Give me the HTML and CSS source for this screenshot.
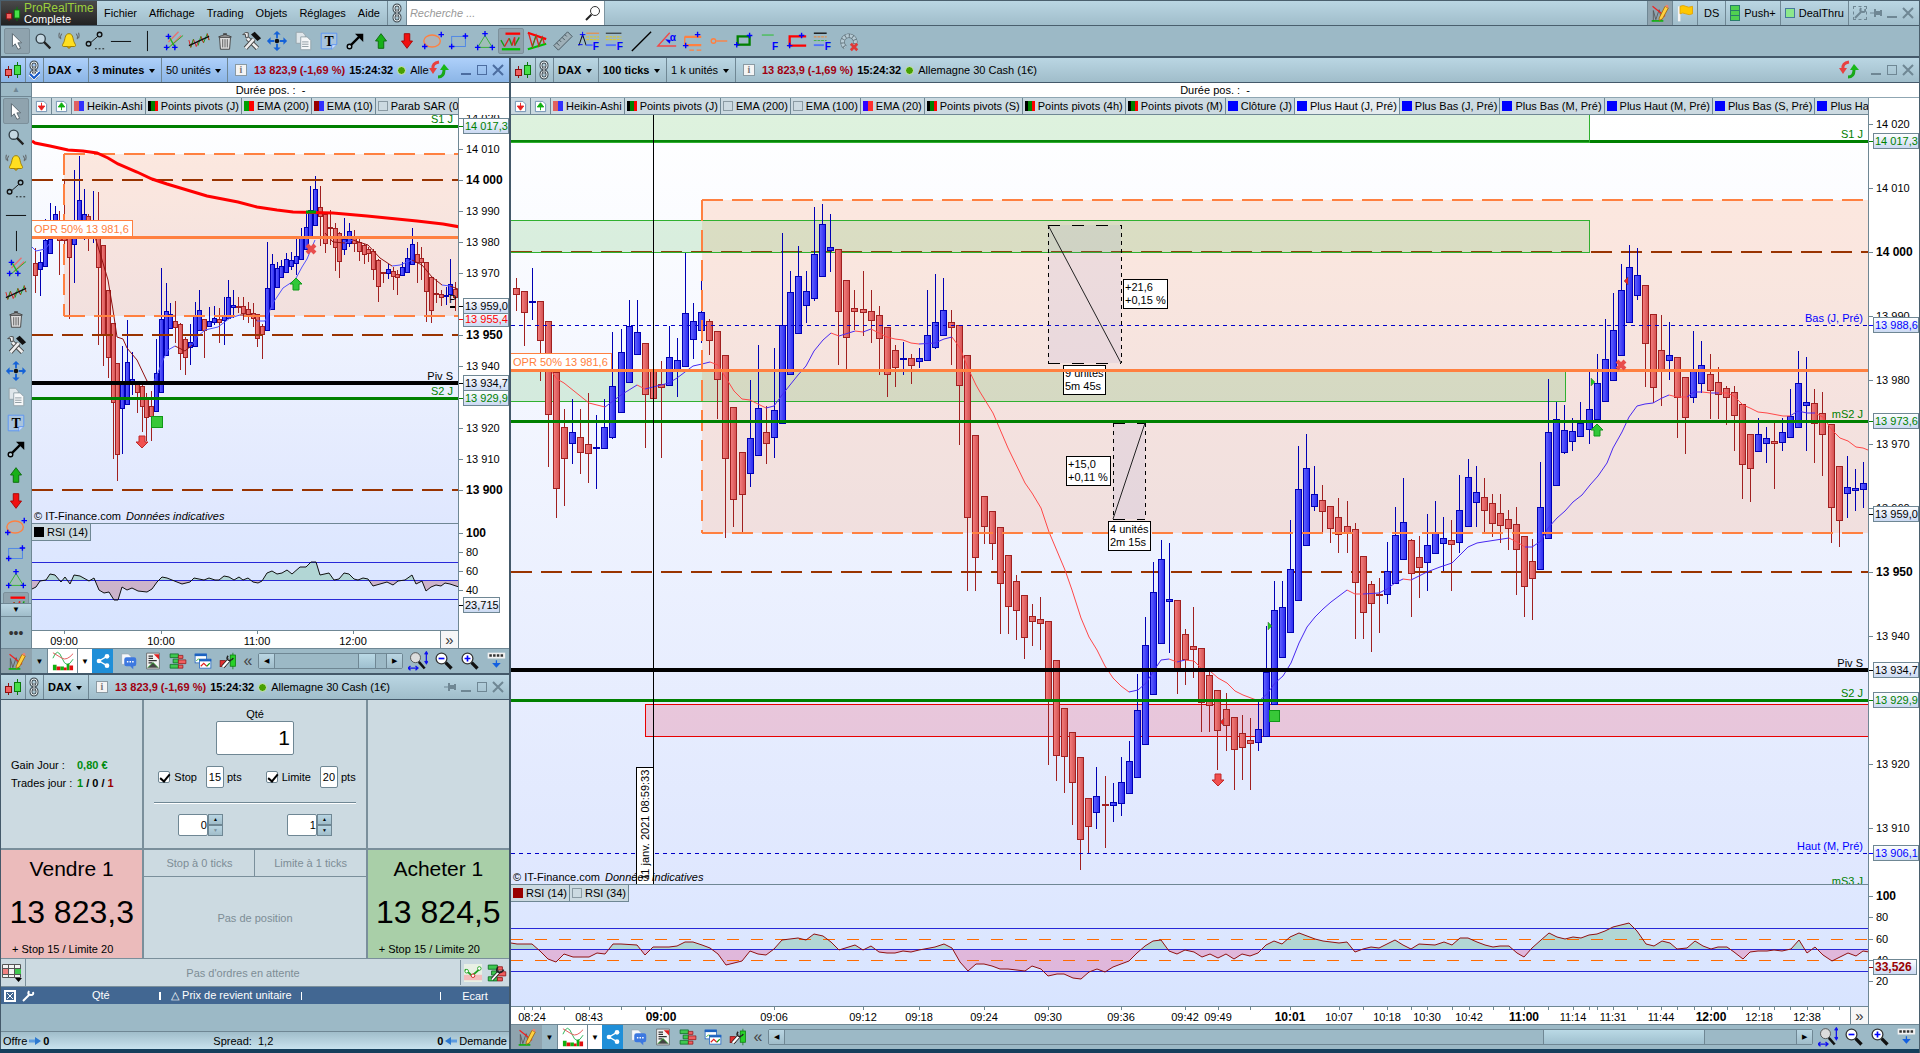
FILE: index.html
```html
<!DOCTYPE html>
<html lang="fr">
<head>
    <meta charset="UTF-8">
    <meta name="viewport" content="width=device-width, initial-scale=1.0">
    <title>ProRealTime Complete</title>
    <link rel="stylesheet" href="styles.css">
</head>
<body>
    <svg class="defs" aria-hidden="true">
        <defs>
            <linearGradient id="candleUp"><stop offset="0" stop-color="#6464ff"/><stop offset="1" stop-color="#2828f0"/></linearGradient>
            <linearGradient id="candleDown"><stop offset="0" stop-color="#f58080"/><stop offset="1" stop-color="#d25050"/></linearGradient>
            <linearGradient id="tag" x2="0" y2="1"><stop offset="0" stop-color="#fff"/><stop offset="1" stop-color="#c9d8f2"/></linearGradient>
        </defs>
    </svg>
    <svg class="symbols" aria-hidden="true">
        <symbol id="candles" viewBox="0 0 18 18"><path d="M4.500 5v12" stroke="#8b1010"/><path d="M13.500 1v16" stroke="#0a7a0a"/><rect x="1.500" y="8.500" width="6" height="6" fill="#f06060" stroke="#8b1010"/><rect x="10.500" y="4.500" width="6" height="9" fill="#48e048" stroke="#0a7a0a"/></symbol>
        <symbol id="link" viewBox="0 0 12 20"><g fill="none" stroke="#4a555c" stroke-width="3"><rect x="3" y="2" width="6" height="7" rx="3"/><rect x="3" y="11" width="6" height="7" rx="3"/></g><g fill="none" stroke="#e8eef0"><rect x="3" y="2" width="6" height="7" rx="3"/><rect x="3" y="11" width="6" height="7" rx="3"/></g><path d="M6 6v8" stroke="#4a555c" stroke-width="3"/><path d="M6 6v8" stroke="#e8eef0"/></symbol>
        <symbol id="link-check" viewBox="0 0 12 20"><use href="#link"/><path d="M2 14l4 4 6-6" fill="none" stroke="#fff" stroke-width="4"/><path d="M2 14l4 4 6-6" fill="none" stroke="#1458c8" stroke-width="2"/></symbol>
        <symbol id="cursor" viewBox="0 0 24 24"><path d="M7 4v14l3-3 3 6 3-1-3-6h4z" fill="#fff" stroke="#56646c"/></symbol>
        <symbol id="loupe" viewBox="0 0 24 24"><circle cx="9.500" cy="9.500" r="5" fill="#c5d8e2" stroke="#34424a" stroke-width="1.500"/><path d="M13 13l7 7" stroke="#222" stroke-width="2.500"/></symbol>
        <symbol id="bell" viewBox="0 0 24 24"><path d="M12 4c-5 0-4 7-6 10-2 3-1 4 0 4h12c1 0 2-1 0-4-2-3-1-10-6-10z" fill="#ffdf20" stroke="#9a7a00"/><path d="M10 18q2 4 4 0" fill="#e0a800" stroke="#9a7a00"/><path d="M4 4q-2 3-1 6M20 4q2 3 1 6M1.500 3q-1 3 0 6M22.500 3q1 3 0 6" fill="none" stroke="#555"/></symbol>
        <symbol id="segment" viewBox="0 0 24 24"><path d="M7 14l8-7" stroke="#111"/><circle cx="5" cy="15" r="2.500" fill="none" stroke="#111" stroke-width="1.500"/><circle cx="17" cy="5" r="2.500" fill="none" stroke="#111" stroke-width="1.500"/><path d="M12 20.500h10" stroke="#111" stroke-dasharray="2 2"/></symbol>
        <symbol id="hline" viewBox="0 0 24 24"><path d="M1 12.500h22" stroke="#000"/></symbol>
        <symbol id="vline" viewBox="0 0 24 24"><path d="M12.500 1v22" stroke="#000"/></symbol>
        <symbol id="channel" viewBox="0 0 24 24"><path d="M7 13L18 2M10 17L21 6" stroke="#e87070" stroke-width="1.500"/><path d="M5 21L23 6" stroke="#20b020"/><path d="M7 6l8 14" stroke="#20b020" stroke-width="1.500"/><path d="M4 7h6M7 4v6M2 19h6M5 16v6M11 19h6M14 16v6" stroke="#00f" stroke-width="1.500"/></symbol>
        <symbol id="zigzag" viewBox="0 0 24 24"><path d="M1 11l2 8 3-9 3 8 3-7" fill="none" stroke="#e02020"/><path d="M3 19l3-9M11 17l3-10 3 7 4-10 2 7" fill="none" stroke="#10a010"/><path d="M14 7l3 7M21 4l2 7" stroke="#e02020"/><path d="M1 17L23 7" stroke="#111" stroke-width="1.500"/></symbol>
        <symbol id="trash" viewBox="0 0 24 24"><path d="M6 8h12l-1 13H7z" fill="#ddd" stroke="#444"/><path d="M9.500 10v9M12 10v9M14.500 10v9" stroke="#555"/><path d="M5 7.500q7-4 14 0z" fill="#eee" stroke="#444"/><path d="M10 4.500h4" stroke="#444" stroke-width="2"/></symbol>
        <symbol id="tools" viewBox="0 0 24 24"><path d="M8 9L19 20" stroke="#444" stroke-width="5"/><path d="M8 9L19 20" stroke="#eee" stroke-width="3"/><path d="M3 5l3 0 0 3 3 0 0-5q-3-1-5 1z" fill="#eee" stroke="#444"/><path d="M6 20L15 10" stroke="#444" stroke-width="5"/><path d="M6 20L15 10" stroke="#eee" stroke-width="3"/><path d="M12 5l4-3 7 7-4 3z" fill="#111"/></symbol>
        <symbol id="move" viewBox="0 0 24 24"><circle cx="12" cy="12" r="2.500" fill="#111"/><path d="M12 1l4 4h-3v4h-2V5H8zM12 23l4-4h-3v-4h-2v4H8zM1 12l4-4v3h4v2H5v3zM23 12l-4-4v3h-4v2h4v3z" fill="#1462d8"/></symbol>
        <symbol id="copy" viewBox="0 0 24 24"><path d="M4.500 2.500h7l3 3v9h-10z" fill="#dfe6ea" stroke="#93a2aa"/><path d="M9.500 7.500h7l4 4v10h-11z" fill="#f5f7f8" stroke="#93a2aa"/><path d="M11 13h7M11 15.500h7M11 18h7" stroke="#8a979e"/></symbol>
        <symbol id="text" viewBox="0 0 24 24"><path d="M3.500 3.500h17v12l-5 5h-12z" fill="#a9c4dd" stroke="#5c94f4"/><path d="M15 21v-5h5" fill="#cfe0fa" stroke="#5c94f4"/><text x="12" y="17" class="icon-serif">T</text></symbol>
        <symbol id="arrow" viewBox="0 0 24 24"><path d="M7 17L17 7" stroke="#000" stroke-width="2.500"/><path d="M12 4h9v9z" fill="#000"/><circle cx="6" cy="18" r="2.500" fill="#b8ced8" stroke="#000" stroke-width="1.500"/></symbol>
        <symbol id="up" viewBox="0 0 24 24"><path d="M12 4l6 8h-3v8H9v-8H6z" fill="#18b018" stroke="#0a6a0a"/></symbol>
        <symbol id="down" viewBox="0 0 24 24"><path d="M12 20l6-8h-3V4H9v8H6z" fill="#f01010" stroke="#a00"/></symbol>
        <symbol id="ellipse" viewBox="0 0 24 24"><ellipse cx="11" cy="12" rx="9" ry="6.500" fill="#aeb5b9" stroke="#ff8040" stroke-width="1.500"/><path d="M18 5h6M21 2v6M0 18h6M3 15v6" stroke="#00f" stroke-width="1.500"/></symbol>
        <symbol id="rect" viewBox="0 0 24 24"><rect x="4" y="7" width="15" height="11" fill="none" stroke="#4b83e8"/><path d="M16 6.500h6M19 3.500v6M1 18h6M4 15v6" stroke="#00f" stroke-width="1.500"/></symbol>
        <symbol id="triangle" viewBox="0 0 24 24"><path d="M12 6l8 13H4z" fill="#a0beb8" stroke="#30b030"/><path d="M9 4h6M12 1v6M1 19h6M4 16v6M17 19h6M20 16v6" stroke="#00f" stroke-width="1.500"/></symbol>
        <symbol id="range" viewBox="0 0 24 24"><path d="M6 4h16" stroke="#f00" stroke-width="2.500"/><path d="M2 21h20" stroke="#00c000" stroke-width="2.500"/><path d="M1 11l4 7M10 9l3 8M16 17l5-9" fill="none" stroke="#10a010" stroke-width="1.500"/><path d="M5 18l5-9M13 17l3-9v9" fill="none" stroke="#e02020" stroke-width="1.500"/></symbol>
        <symbol id="wedge" viewBox="0 0 24 24"><path d="M2 3l20 7" stroke="#f00" stroke-width="2.500"/><path d="M2 21l20-6" stroke="#00c000" stroke-width="2.500"/><path d="M3 4l4 14 4-12 3 11 4-9 2 7" fill="none" stroke="#e02020" stroke-width="1.500"/><path d="M7 18L11 6M14 17l4-9" stroke="#10a010"/></symbol>
        <symbol id="ruler" viewBox="0 0 24 24"><path d="M2 17L17 2l5 5L7 22z" fill="#9fb0b8" stroke="#43535c"/><path d="M5 14l3 3M8 11l2 2M11 8l3 3M14 5l2 2" stroke="#43535c"/></symbol>
        <symbol id="fibo1" viewBox="0 0 24 24"><path d="M1 17L5 5l4 12" fill="none" stroke="#000"/><path d="M2 5h6M5 2v6M0 16h5" stroke="#00f"/><path d="M9 3.500h14" stroke="#ff8020"/><path d="M9 7.500h14M9 10.500h14" stroke="#e8c810" stroke-dasharray="3 1"/><path d="M9 16.500h7" stroke="#5070ff" stroke-width="2"/><text x="16" y="22" class="icon-f">F</text></symbol>
        <symbol id="fibo2" viewBox="0 0 24 24"><path d="M2 3.500h17" stroke="#111"/><path d="M2 7.500h17M2 10.500h17" stroke="#e8c810" stroke-dasharray="3 1"/><path d="M2 16.500h11" stroke="#5070ff" stroke-width="2"/><text x="14" y="22" class="icon-f">F</text></symbol>
        <symbol id="diag" viewBox="0 0 24 24"><path d="M2 23L23 2" stroke="#000" stroke-width="1.500"/></symbol>
        <symbol id="angle" viewBox="0 0 24 24"><path d="M15 3L2 17.500h20" fill="none" stroke="#f04848" stroke-width="1.500"/><path d="M10 10l6 1-1 4z" fill="#00f"/><text x="15" y="12" class="icon-f">α</text></symbol>
        <symbol id="orange" viewBox="0 0 24 24"><path d="M3 7.500h18M3 16.500h18" stroke="#ff8040" stroke-width="2.500"/><path d="M3 7v10M8 22h5M16 22h5" stroke="#ff8040" stroke-width="1.500"/><path d="M14 5h6M17 2v6M1 17h6M4 14v6" stroke="#00f" stroke-width="1.500"/></symbol>
        <symbol id="ray" viewBox="0 0 24 24"><circle cx="6" cy="12" r="2.500" fill="none" stroke="#ff8040" stroke-width="1.500"/><path d="M9 12h12" stroke="#ff8040" stroke-width="1.500"/></symbol>
        <symbol id="green" viewBox="0 0 24 24"><rect x="4" y="7" width="13" height="9" fill="none" stroke="#008000" stroke-width="2.500"/><path d="M14 6h6M17 3v6M0 16h6M3 13v6" stroke="#00f" stroke-width="1.500"/></symbol>
        <symbol id="fibo3" viewBox="0 0 24 24"><path d="M2 5.500h13" stroke="#20c020"/><text x="13" y="22" class="icon-f">F</text></symbol>
        <symbol id="red" viewBox="0 0 24 24"><path d="M22 7H4v10h18" fill="none" stroke="#f00" stroke-width="2.500"/><path d="M14 6h6M17 3v6M1 17h6M4 14v6" stroke="#00f" stroke-width="1.500"/></symbol>
        <symbol id="fibo4" viewBox="0 0 24 24"><path d="M2 3.500h14" stroke="#111" stroke-width="1.500"/><path d="M2 7.500h14" stroke="#ff8020" stroke-dasharray="3 1"/><path d="M2 11.500h14" stroke="#40b040" stroke-dasharray="3 1"/><path d="M2 16.500h11" stroke="#5070ff" stroke-width="2"/><text x="14" y="22" class="icon-f">F</text></symbol>
        <symbol id="arc" viewBox="0 0 24 24"><path d="M17 18a7 7 0 1 0-9 1" fill="none" stroke="#65777f" stroke-width="5"/><path d="M17 18a7 7 0 1 0-9 1" fill="none" stroke="#b6cbd5" stroke-width="3.500" stroke-dasharray="3 1"/><path d="M14 15l7 7M21 15l-7 7" stroke="#e03838" stroke-width="3"/></symbol>
        <symbol id="pencil" viewBox="0 0 24 24"><path d="M4 22V9l3 11 4-12 3 12 3-7" fill="none" stroke="#555"/><path d="M3 4l15 12" stroke="#f02020" stroke-width="1.500"/><path d="M2 21.500h14" stroke="#10b010" stroke-width="2"/><path d="M11 18l7-14 4 2-7 13-4 2z" fill="#ffd040" stroke="#a06808"/><path d="M18 4l4 2 0-3-2-1z" fill="#f08070"/></symbol>
        <symbol id="flag" viewBox="0 0 24 24"><path d="M5 4v18" stroke="#f4f4f4" stroke-width="3"/><path d="M6 4q4-2 7 0t8 0v9q-4 2-8 0t-7 0z" fill="#ffc800" stroke="#e0a000"/></symbol>
        <symbol id="refresh" viewBox="0 0 20 20"><path d="M10 2q-7 1-6 7" fill="none" stroke="#e84040" stroke-width="3"/><path d="M0 8h8l-4 6z" fill="#e84040"/><path d="M9 17q6 0 6-7" fill="none" stroke="#18a818" stroke-width="3"/><path d="M11 10h9l-5-6z" fill="#18b818"/></symbol>
        <symbol id="win-min" viewBox="0 0 12 12"><path d="M1 10h10" stroke="currentColor" stroke-width="2"/></symbol>
        <symbol id="win-max" viewBox="0 0 12 12"><rect x="1.500" y="1.500" width="9" height="9" fill="none" stroke="currentColor"/></symbol>
        <symbol id="win-close" viewBox="0 0 12 12"><path d="M1 1l10 10M11 1L1 11" stroke="currentColor" stroke-width="2"/></symbol>
        <symbol id="pin" viewBox="0 0 12 12"><path d="M0 6h5" stroke="currentColor"/><path d="M5 2v8M11 3v6" stroke="currentColor" stroke-width="2"/><path d="M5 6h6" stroke="currentColor" stroke-width="4"/></symbol>
        <symbol id="wrench" viewBox="0 0 12 12"><path d="M1 11L7 5" stroke="currentColor" stroke-width="2"/><path d="M7 1q-2 4 2 4 3 0 2-3" fill="none" stroke="currentColor" stroke-width="2"/></symbol>
        <symbol id="doc-down" viewBox="0 0 14 14"><path d="M1.500 1.500h8l3 3v8h-11z" fill="#fff" stroke="#6d8fb0"/><path d="M7 3v4M3.500 6.500h7L7 11z" fill="#e82020" stroke="#e82020"/></symbol>
        <symbol id="doc-up" viewBox="0 0 14 14"><path d="M1.500 1.500h8l3 3v8h-11z" fill="#fff" stroke="#6d8fb0"/><path d="M7 11V7M3.500 7.500h7L7 3z" fill="#10b010" stroke="#10b010"/></symbol>
        <symbol id="curves" viewBox="0 0 24 24"><path d="M1 9q5-13 10 0t12 1" fill="none" stroke="#20b050"/><path d="M1 3q5 3 10 6t12-5" fill="none" stroke="#e05050"/><path d="M1 16h4v6H1zM9 18h4v4H9zM16 15h3v7h-3z" fill="#10b010"/><path d="M5 18h4v4H5zM13 19h3v3h-3zM19 17h4v5h-4z" fill="#e01010"/></symbol>
        <symbol id="share" viewBox="0 0 24 24"><path d="M18 5L6 12l12 7" fill="none" stroke="#fff" stroke-width="2"/><circle cx="18" cy="5" r="3.500" fill="#fff"/><circle cx="6" cy="12" r="3.500" fill="#fff"/><circle cx="18" cy="19" r="3.500" fill="#fff"/></symbol>
        <symbol id="chat" viewBox="0 0 24 24"><path d="M3.500 2.500h9l4 4v10h-13z" fill="#f4f7fa" stroke="#9aaab5"/><path d="M10 7h10q3 0 3 3v6q0 3-3 3h-1v4l-4-4h-5q-3 0-3-3v-6q0-3 3-3z" fill="#3c78e0"/><path d="M10.500 13h2M14 13h2M17.500 13h2" stroke="#fff" stroke-width="2"/></symbol>
        <symbol id="news" viewBox="0 0 24 24"><path d="M3.500 1.500h17v21h-17z" fill="#f4f4f4" stroke="#555"/><path d="M6 5.500h6M6 8.500h6M6 11.500h11M6 14.500h5" stroke="#333" stroke-width="1.500"/><path d="M13 3h7v7z" fill="#e02020"/><path d="M5 21l7-7 7 7" fill="#444" stroke="#10a010"/></symbol>
        <symbol id="book" viewBox="0 0 24 24"><path d="M1.500 2.500h11v5h-11zM5.500 9.500h7v5h-7zM1.500 16.500h11v5h-11z" fill="#40c850" stroke="#0a6a20"/><path d="M12.500 4.500h6v4h-6zM12.500 10.500h10v5h-10zM12.500 17.500h6v4h-6z" fill="#f06060" stroke="#901818"/></symbol>
        <symbol id="book-setup" viewBox="0 0 24 24"><use href="#book"/><path d="M6 20L15 10" stroke="#222" stroke-width="4"/><path d="M6 20L15 10" stroke="#fff" stroke-width="2"/><path d="M13 5q-3 5 1 6t6-3" fill="none" stroke="#222" stroke-width="2"/></symbol>
        <symbol id="windows" viewBox="0 0 24 24"><rect x="1.500" y="2.500" width="15" height="12" fill="#fff" stroke="#1c62c0"/><path d="M1 4h16" stroke="#1c62c0" stroke-width="3"/><rect x="7.500" y="9.500" width="15" height="12" fill="#fff" stroke="#1c62c0"/><path d="M7 11h16" stroke="#1c62c0" stroke-width="3"/><path d="M3 12l3-3 2 2" fill="none" stroke="#10a010"/><path d="M9 19l4-4 4 4" fill="none" stroke="#e02020" stroke-width="1.500"/><path d="M17 19l4-4" stroke="#10a010" stroke-width="1.500"/></symbol>
        <symbol id="setup" viewBox="0 0 24 24"><path d="M18.500 1v22" stroke="#0a7a0a"/><rect x="15" y="4" width="7" height="15" fill="#28d028" stroke="#0a7a0a"/><rect x="1.500" y="11.500" width="7" height="8" fill="#e03030" stroke="#801010"/><path d="M5 20L14 10" stroke="#222" stroke-width="5"/><path d="M5 20L14 10" stroke="#fff" stroke-width="3"/><path d="M12 5q-3 5 1 6t6-3" fill="none" stroke="#222" stroke-width="2"/></symbol>
        <symbol id="zoomfit" viewBox="0 0 24 24"><circle cx="9" cy="8" r="6" fill="#dcdcdc" stroke="#444"/><path d="M13 13l7 8" stroke="#111" stroke-width="3"/><path d="M22 2v12M20 4l2-3 2 3M20 12l2 3 2-3M1 20.500h10M3 18l-3 2.500L3 23M9 18l3 2.500L9 23" fill="none" stroke="#1010f0" stroke-width="1.500"/></symbol>
        <symbol id="zoomout" viewBox="0 0 24 24"><circle cx="9" cy="9" r="6.500" fill="#fff" stroke="#333" stroke-width="1.500"/><path d="M14 14l7 7" stroke="#111" stroke-width="4"/><path d="M5.500 9h7" stroke="#00f" stroke-width="2"/></symbol>
        <symbol id="zoomin" viewBox="0 0 24 24"><circle cx="9" cy="9" r="6.500" fill="#fff" stroke="#333" stroke-width="1.500"/><path d="M14 14l7 7" stroke="#111" stroke-width="4"/><path d="M5.500 9h7M9 5.500v7" stroke="#00f" stroke-width="2"/></symbol>
        <symbol id="keyboard" viewBox="0 0 24 24"><path d="M2 2h21v7H2z" fill="#f2f2f2"/><path d="M4 5.500h17" stroke="#333" stroke-width="3" stroke-dasharray="3 1.500"/><path d="M12.500 11v6M9 15h7l-3.500 4z" fill="#1460e0" stroke="#1460e0" stroke-width="1.500"/></symbol>
        <symbol id="grid" viewBox="0 0 22 20"><path d="M1.500 1.500h18v13h-18z" fill="#f4f4f4" stroke="#555"/><path d="M2 6h6v6H2z" fill="#f08080"/><path d="M14 6h6v6h-6z" fill="#40c850"/><path d="M1 5.500h19M1 11.500h19M7.500 1v14M13.500 1v14" stroke="#555"/><path d="M14 15h7l-3.500 4z" fill="#000"/></symbol>
        <symbol id="pnl" viewBox="0 0 20 20"><rect width="20" height="20" fill="#e8f0e4"/><path d="M0 12h20v6H0z" fill="#f3bcbc"/><path d="M1 6l8 7 8-7" fill="none" stroke="#20a020" stroke-width="2"/><circle cx="3" cy="8" r="2" fill="#fff" stroke="#20a020"/><circle cx="10" cy="13" r="2" fill="#fff" stroke="#d02020"/><circle cx="17" cy="5" r="2" fill="#fff" stroke="#20a020"/></symbol>
        <symbol id="flow" viewBox="0 0 12 10"><path d="M0 5h7" stroke="#5c9ce0" stroke-width="3"/><path d="M6 1l6 4-6 4z" fill="#2c78d0"/></symbol>
    </svg>

    <header class="menubar">
        <div class="logo">
            <svg width="16" height="20"><use href="#candles"/></svg>
            <p><b>ProRealTime</b><br>Complete</p>
        </div>
        <nav class="menu">
            <a href="#">Fichier</a><a href="#">Affichage</a><a href="#">Trading</a><a href="#">Objets</a><a href="#">Réglages</a><a href="#">Aide</a>
        </nav>
        <span class="link-cell"><svg width="12" height="20"><use href="#link"/></svg></span>
        <label class="search">
            <input type="search" placeholder="Recherche ..." aria-label="Recherche">
            <svg width="16" height="16" viewBox="0 0 16 16"><circle cx="10" cy="6" r="4.500" fill="none" stroke="#333"/><path d="M6.500 9.500L1 15" stroke="#222" stroke-width="2"/></svg>
        </label>
        <div class="menu-right">
            <button class="pressed" aria-label="Dessin"><svg width="20" height="20"><use href="#pencil"/></svg></button>
            <button aria-label="Drapeau"><svg width="20" height="20"><use href="#flag"/></svg></button>
            <button>DS</button>
            <button><i class="push"></i>Push+</button>
            <button><i class="deal"></i>DealThru</button>
            <div class="win-buttons">
                <button aria-label="Options"><svg class="dashed" width="12" height="12"><use href="#wrench"/></svg></button>
                <button aria-label="Épingler"><svg width="12" height="12"><use href="#pin"/></svg></button>
                <button aria-label="Réduire"><svg width="12" height="12"><use href="#win-min"/></svg></button>
                <button aria-label="Fermer"><svg width="12" height="12"><use href="#win-close"/></svg></button>
            </div>
        </div>
    </header>

    <div class="toolbar" id="toolbar"></div>

    <main class="desk">
        <div class="left">
            <section class="window grow">
                <div class="titlebar active">
                    <span class="cell"><svg width="18" height="18"><use href="#candles"/></svg></span>
                    <span class="cell link-narrow"><svg width="12" height="20"><use href="#link-check"/></svg></span>
                    <span class="drop bold"><select aria-label="Instrument"><option>DAX</option></select></span>
                    <span class="drop bold"><select aria-label="Unité de temps"><option>3 minutes</option></select></span>
                    <span class="drop"><select aria-label="Historique"><option>50 unités</option></select></span>
                    <span class="quote"><i class="info">i</i><b class="price">13 823,9 (-1,69 %)</b><b>15:24:32</b><i class="dot"></i><span class="name">Allemagne 30 Cash (1€)</span></span>
                    <svg class="refresh" width="20" height="20"><use href="#refresh"/></svg>
                    <div class="win-buttons">
                        <button aria-label="Réduire"><svg width="12" height="12"><use href="#win-min"/></svg></button>
                        <button aria-label="Agrandir"><svg width="12" height="12"><use href="#win-max"/></svg></button>
                        <button aria-label="Fermer"><svg width="12" height="12"><use href="#win-close"/></svg></button>
                    </div>
                </div>
                <div class="work">
                    <div class="sidebar">
                        <button class="side-top" aria-label="Haut">▲</button>
                        <div class="side-icons" id="sidebar"></div>
                        <button class="side-more" aria-label="Bas">▼</button>
                        <div class="side-dots">•••</div>
                    </div>
                    <div class="chart">
                        <p class="duree">Durée pos. :&nbsp; -</p>
                        <div class="plots">
                            <div class="chips" id="chipsLeft"></div>
                            <svg class="plot main-plot" id="priceLeft"></svg>
                            <div class="rsi rsi-short">
                                <svg class="plot" id="rsiLeft"></svg>
                                <div class="chips legend"><span class="chip"><i style="background:#000"></i>RSI (14)</span></div>
                            </div>
                            <div class="times"><svg id="timeLeft"></svg><button aria-label="Suite">»</button></div>
                        </div>
                        <div class="axes">
                            <svg class="main-plot axis" id="axisLeft"></svg>
                            <svg class="rsi-short axis" id="rsiAxisLeft"></svg>
                        </div>
                    </div>
                </div>
                <div class="bottombar"></div>
            </section>

            <section class="window">
                <div class="titlebar">
                    <span class="cell"><svg width="18" height="18"><use href="#candles"/></svg></span>
                    <span class="cell link-narrow"><svg width="12" height="20"><use href="#link"/></svg></span>
                    <span class="drop bold"><select aria-label="Instrument"><option>DAX</option></select></span>
                    <span class="quote"><i class="info">i</i><b class="price">13 823,9 (-1,69 %)</b><b>15:24:32</b><i class="dot"></i><span class="name">Allemagne 30 Cash (1€)</span></span>
                    <div class="win-buttons">
                        <button aria-label="Épingler"><svg width="12" height="12"><use href="#pin"/></svg></button>
                        <button aria-label="Réduire"><svg width="12" height="12"><use href="#win-min"/></svg></button>
                        <button aria-label="Agrandir"><svg width="12" height="12"><use href="#win-max"/></svg></button>
                        <button aria-label="Fermer"><svg width="12" height="12"><use href="#win-close"/></svg></button>
                    </div>
                </div>
                <div class="ticket">
                    <div class="stats">
                        <span>Gain Jour :</span><b class="pos">0,80 €</b>
                        <span>Trades jour :</span><b><span class="pos">1</span> / 0 / <span class="neg">1</span></b>
                    </div>
                    <div class="order">
                        <label for="qty">Qté</label>
                        <input class="qty" id="qty" type="text" value="1">
                        <div class="limits">
                            <label><input type="checkbox" checked>Stop</label>
                            <label><input class="pts" type="text" value="15">pts</label>
                            <label class="second"><input type="checkbox" checked>Limite</label>
                            <label><input class="pts" type="text" value="20">pts</label>
                        </div>
                        <hr>
                        <div class="spinners">
                            <div class="spinner"><input type="text" value="0" aria-label="Ticks stop"><span><button aria-label="Plus">▲</button><button aria-label="Moins" disabled>▼</button></span></div>
                            <div class="spinner"><input type="text" value="1" aria-label="Ticks limite"><span><button aria-label="Plus">▲</button><button aria-label="Moins">▼</button></span></div>
                        </div>
                    </div>
                    <div></div>
                    <button class="deal-btn sell"><span>Vendre 1</span><strong>13 823,3</strong><small>+ Stop 15 / Limite 20</small></button>
                    <div class="position">
                        <div class="ticks"><button>Stop à 0 ticks</button><button>Limite à 1 ticks</button></div>
                        <p>Pas de position</p>
                    </div>
                    <button class="deal-btn buy"><span>Acheter 1</span><strong>13 824,5</strong><small>+ Stop 15 / Limite 20</small></button>
                </div>
                <div class="orders">
                    <button aria-label="Affichage"><svg width="22" height="20"><use href="#grid"/></svg></button>
                    <p>Pas d'ordres en attente</p>
                    <div><svg width="18" height="18"><use href="#pnl"/></svg><svg width="20" height="20"><use href="#book-setup"/></svg></div>
                </div>
                <table class="positions">
                    <thead><tr><th class="qte"><svg width="12" height="12" viewBox="0 0 12 12"><path d="M1 1h10v10H1z" fill="none" stroke="#fff" stroke-width="2"/><path d="M3 3l6 6M9 3L3 9" stroke="#fff"/></svg><svg width="14" height="12"><use href="#wrench"/></svg><span>Qté</span></th><th class="pru">△ Prix de revient unitaire</th><th></th><th class="ecart">Ecart</th></tr></thead>
                    <tbody><tr><td colspan="4"></td></tr></tbody>
                </table>
                <div class="status"><span>Offre <svg width="12" height="10"><use href="#flow"/></svg><b>0</b></span><span>Spread:&nbsp; 1,2</span><span><b>0</b><svg class="back" width="12" height="10"><use href="#flow"/></svg> Demande</span></div>
            </section>
        </div>

        <section class="window right">
            <div class="titlebar">
                <span class="cell"><svg width="18" height="18"><use href="#candles"/></svg></span>
                <span class="cell link-narrow"><svg width="12" height="20"><use href="#link"/></svg></span>
                <span class="drop bold"><select aria-label="Instrument"><option>DAX</option></select></span>
                <span class="drop bold"><select aria-label="Unité de temps"><option>100 ticks</option></select></span>
                <span class="drop"><select aria-label="Historique"><option>1 k unités</option></select></span>
                <span class="quote"><i class="info">i</i><b class="price">13 823,9 (-1,69 %)</b><b>15:24:32</b><i class="dot"></i><span class="name">Allemagne 30 Cash (1€)</span></span>
                <svg class="refresh" width="20" height="20"><use href="#refresh"/></svg>
                <div class="win-buttons">
                    <button aria-label="Réduire"><svg width="12" height="12"><use href="#win-min"/></svg></button>
                    <button aria-label="Agrandir"><svg width="12" height="12"><use href="#win-max"/></svg></button>
                    <button aria-label="Fermer"><svg width="12" height="12"><use href="#win-close"/></svg></button>
                </div>
            </div>
            <div class="work">
                <div class="chart">
                    <p class="duree">Durée pos. :&nbsp; -</p>
                    <div class="plots">
                        <div class="chips" id="chipsRight"></div>
                        <svg class="plot main-plot" id="priceRight"></svg>
                        <div class="rsi rsi-tall">
                            <svg class="plot" id="rsiRight"></svg>
                            <div class="chips legend"><span class="chip"><i style="background:#900"></i>RSI (14)</span><span class="chip"><i class="off"></i>RSI (34)</span></div>
                        </div>
                        <div class="times"><svg id="timeRight"></svg><button aria-label="Suite">»</button></div>
                    </div>
                    <div class="axes">
                        <svg class="main-plot axis" id="axisRight"></svg>
                        <svg class="rsi-tall axis" id="rsiAxisRight"></svg>
                    </div>
                </div>
            </div>
            <div class="bottombar"></div>
        </section>
    </main>
    <script src="charts.js"></script>
</body>
</html>
```
FILE: styles.css
```css
* {
    box-sizing: border-box;
}
body {
    margin: 0;
    min-height: 100vh;
    display: flex;
    flex-direction: column;
    font: 11px "Liberation Sans", Arial, sans-serif;
    color: #000;
    background: #153f5c;
    padding-bottom: 4px;
    border-top: 1px solid #4a5f6d;
    border-right: 1px solid #4a5f6d;
    overflow: hidden;
}
p {
    margin: 0;
}
i {
    font-style: normal;
}
svg {
    display: block;
    flex: none;
}
button, input, select {
    font: inherit;
    color: inherit;
    border: 0;
    padding: 0;
    background: none;
    border-radius: 0;
}
a {
    color: inherit;
    text-decoration: none;
}
.defs {
    position: absolute;
    width: 0;
    height: 0;
}
.symbols {
    display: none;
}
svg .icon-serif {
    font: bold 15px "Liberation Serif", serif;
    text-anchor: middle;
}
svg .icon-f {
    font: bold 11px "Liberation Sans", sans-serif;
    fill: #00f;
}

/* menu */
.menubar {
    display: flex;
    height: 25px;
    background: linear-gradient(#bad6e3, #a0bdca);
    border-bottom: 1px solid #4a5f6d;
    border-left: 1px solid #4a5f6d;
}
.logo {
    width: 96px;
    background: linear-gradient(#4a4a4a, #222);
    color: #fff;
    display: flex;
    align-items: center;
    gap: 3px;
    padding: 1px 0 0 4px;
    line-height: 11px;
}
.logo b {
    color: #9bd03c;
    font-size: 12px;
    font-weight: normal;
}
.menu {
    display: flex;
    align-items: center;
    gap: 12px;
    padding: 0 7px;
}
.link-cell {
    border: 1px solid #6f8794;
    border-width: 0 1px;
    width: 20px;
    padding: 2px 3px;
}
.search {
    width: 198px;
    background: #fff;
    display: flex;
    align-items: center;
    padding: 0 3px;
    border-right: 1px solid #7d94a0;
}
.search input {
    flex: 1;
    min-width: 0;
    outline: 0;
}
.search input::placeholder {
    color: #999;
    font-style: italic;
}
.menu-right {
    display: flex;
    margin-left: auto;
}
.menu-right > button {
    border-left: 1px solid #6f8794;
    padding: 0 4px;
    display: flex;
    align-items: center;
    gap: 4px;
}
.menu-right > button:nth-child(-n+2) {
    padding: 0 2px;
}
.menu-right > button:nth-child(3) {
    padding: 0 6px;
}
.menu-right .pressed {
    background: #8fa3ae;
}
.push {
    width: 10px;
    height: 16px;
    border: 1px solid #2a7d6a;
    background: repeating-linear-gradient(#50d050 0 4px, #2a7d6a 4px 5px);
}
.deal {
    width: 10px;
    height: 10px;
    border: 1px solid #467a9c;
    background: #8ce88c;
}
.win-buttons {
    display: flex;
    align-items: center;
    gap: 4px;
    padding: 0 5px;
    color: #6f8794;
    margin-left: auto;
}
.menu-right .win-buttons {
    border-left: 1px solid #6f8794;
}
.dashed {
    outline: 1px dashed #6f8794;
}
.active .win-buttons {
    color: #4c6da0;
}

/* drawing tools */
.toolbar {
    display: flex;
    align-items: center;
    height: 32px;
    padding: 0 3px;
    background: #9cb9c6;
    border-bottom: 2px solid #44596a;
    border-left: 1px solid #4a5f6d;
}
.tool {
    width: 26px;
    height: 26px;
    display: flex;
    flex: none;
    align-items: center;
    justify-content: center;
    border: 1px solid transparent;
    border-radius: 2px;
}
.tool.on {
    background: #8fa3ae;
    border-color: #7c909b;
}

/* windows */
.desk {
    flex: 1;
    display: grid;
    grid-template-columns: 511px minmax(0, 1fr);
}
.left {
    display: flex;
    flex-direction: column;
    gap: 2px;
    background: #44596a;
    padding-right: 2px;
}
.window {
    border-left: 1px solid #44596a;
    display: flex;
    flex-direction: column;
    background: #9cb9c6;
}
.window.right {
    border-left: 0;
}
.window.grow {
    flex: 1;
}
.titlebar {
    height: 25px;
    display: flex;
    background: linear-gradient(#bad6e3, #a0bdca);
    border-bottom: 1px solid #44596a;
    overflow: hidden;
}
.titlebar.active {
    background: linear-gradient(#aed0fa, #8bb5e6);
}
.cell {
    width: 25px;
    padding: 3px;
    border-right: 1px solid #6f8794;
    flex: none;
}
.link-narrow {
    width: 18px;
    padding: 2px;
}
.drop {
    position: relative;
    display: flex;
    border-right: 1px solid #6f8794;
    flex: none;
}
.drop.bold {
    font-weight: bold;
}
.drop select {
    appearance: none;
    padding: 0 16px 0 4px;
    outline: 0;
}
.drop::after {
    content: "";
    position: absolute;
    right: 6px;
    top: 11px;
    border: 3px solid transparent;
    border-top: 4px solid #000;
    border-bottom: 0;
    pointer-events: none;
}
.quote {
    display: flex;
    align-items: center;
    gap: 4px;
    padding-left: 7px;
    min-width: 0;
    white-space: nowrap;
    overflow: hidden;
}
.quote > * {
    flex: none;
}
.info {
    width: 12px;
    height: 12px;
    background: #f4f4f4;
    border: 1px solid #8a9aa3;
    color: #777;
    text-align: center;
    font: bold 10px/10px "Liberation Serif", serif;
}
.price {
    color: #a00010;
    margin-left: 3px;
}
.dot {
    width: 9px;
    height: 9px;
    border-radius: 50%;
    background: #48a000;
    border: 1px solid #d0e8c0;
}
.quote .name {
    flex: 0 1 auto;
    overflow: hidden;
}
.refresh {
    margin: 2px 0 0 auto;
}
.titlebar .refresh + .win-buttons {
    margin-left: 6px;
}
.active .refresh {
    margin-left: 0;
}
.work {
    flex: 1;
    display: flex;
}

.sidebar {
    width: 31px;
    border-right: 1px solid #6f8794;
    display: flex;
    flex-direction: column;
    background: #9cb9c6;
}
.side-top {
    height: 14px;
    font-size: 8px;
    line-height: 8px;
    color: #6f8794;
    border-bottom: 1px solid #6f8794;
}
.side-icons {
    flex: 1 1 0;
    min-height: 0;
    overflow: hidden;
    padding: 1px 2px;
}
.side-more {
    height: 14px;
    font-size: 8px;
    line-height: 8px;
    background: linear-gradient(#bad6e3, #a0bdca);
    border: 1px solid #6f8794;
    border-width: 1px 0;
}
.side-dots {
    height: 31px;
    text-align: center;
    padding-top: 10px;
    color: #333;
    font-size: 14px;
    line-height: 12px;
}

.chart {
    flex: 1;
    min-width: 0;
    display: grid;
    grid-template: 15px 1fr / minmax(0, 1fr) 50px;
    background: #fff;
}
.duree {
    grid-column: 1 / 3;
    text-align: center;
    line-height: 14px;
    border-bottom: 1px solid #8fa6b2;
}
.plots, .axes {
    display: flex;
    flex-direction: column;
    min-height: 0;
}
.plots {
    border-right: 1px solid #6f8794;
}
.chips {
    display: flex;
    height: 17px;
    overflow: hidden;
    background: #ccdae1;
    border-bottom: 1px solid #6f8794;
}
.chip {
    display: flex;
    flex: none;
    align-items: center;
    gap: 3px;
    padding: 0 2px;
    border-right: 1px solid #6f8794;
    white-space: nowrap;
    background: #ccdae1;
}
.chip.doc {
    padding: 0 3px;
}
.chip.hot {
    background: #e4ebee;
}
.chip i {
    width: 10px;
    height: 10px;
}
.chip i.off {
    border: 1px solid #8a9aa3;
}
.legend {
    position: absolute;
    top: 0;
    left: 0;
}
.main-plot {
    flex: 1 1 0;
    min-height: 0;
}
.plot {
    width: 100%;
    background: linear-gradient(#fff, #dfe7fe);
}
.rsi {
    position: relative;
    border-top: 1px solid #6f8794;
    border-bottom: 1px solid #6f8794;
}
.rsi .plot {
    height: 100%;
    background: linear-gradient(#dfe8ff, #d8e4ff);
}
.rsi-short {
    height: 108px;
}
.rsi-tall {
    height: 123px;
}
.times {
    display: flex;
    height: 17px;
}
.times svg {
    flex: 1;
    min-width: 0;
    height: 17px;
}
.times button {
    width: 18px;
    border-left: 1px solid #6f8794;
    background: #f6f6f6;
    font-size: 15px;
    line-height: 12px;
    color: #333;
}
.axes {
    padding: 17px 0;
}
.axis {
    width: 50px;
    flex-shrink: 0;
}
svg text {
    font-size: 11px;
}
svg .major {
    font-size: 12px;
    font-weight: bold;
}
.sharp {
    shape-rendering: crispEdges;
}

.bottombar {
    height: 25px;
    display: flex;
    align-items: center;
    border-top: 1px solid #6f8794;
    background: #9cb9c6;
}
.bottombar > button {
    width: 25px;
    height: 24px;
    display: flex;
    align-items: center;
    justify-content: center;
    flex: none;
}
.bottombar .draw {
    width: 31px;
    background: #8fa3ae;
}
.bottombar .tiny {
    width: 15px;
    font-size: 8px;
}
.bottombar .white {
    background: #fff;
    border-left: 1px solid #6f8794;
}
.bottombar .style {
    width: 30px;
}
.bottombar .share {
    width: 21px;
    background: #1f8fd8;
    margin-right: 2px;
}
.bottombar .less {
    width: 16px;
    font-size: 16px;
    color: #444;
}
.bottombar .zoom {
    width: 26px;
}
.scroll {
    flex: 1;
    display: flex;
    height: 16px;
    border: 1px solid #6f8794;
    border-radius: 2px;
    margin: 0 2px;
}
.scroll button {
    width: 15px;
    font-size: 7px;
    background: linear-gradient(#bad6e3, #a0bdca);
}
.track {
    flex: 1;
    border: 1px solid #6f8794;
    border-width: 0 1px;
}
.thumb {
    margin-left: 75%;
    width: 16%;
    height: 14px;
    background: linear-gradient(#bad9e5, #9fc0cf);
    border: 1px solid #6f8794;
    border-width: 0 1px;
}

/* trading ticket */
.ticket {
    display: grid;
    grid-template: 148px 108px / 2fr 3fr 2fr;
    gap: 2px;
    background: #7a8f9b;
    border-bottom: 1px solid #7a8f9b;
}
.ticket > div {
    background: #ccdae1;
}
.stats {
    display: grid;
    grid-template-columns: 61px 1fr;
    column-gap: 5px;
    padding: 0 10px;
    align-content: center;
    line-height: 18px;
    white-space: nowrap;
}
.pos {
    color: #008c10;
}
.neg {
    color: #900;
}
.order {
    padding: 8px 10px;
    display: flex;
    flex-direction: column;
    align-items: center;
}
.order input[type="text"] {
    background: #fff;
    border: 1px solid #6f8794;
    border-radius: 2px;
}
.order .qty {
    width: 78px;
    height: 34px;
    margin-top: 1px;
    font-size: 21px;
    text-align: right;
    padding-right: 3px;
}
.limits {
    display: flex;
    align-self: stretch;
    align-items: center;
    gap: 9px;
    margin-top: 11px;
    padding-left: 4px;
}
.limits label {
    display: flex;
    align-items: center;
    gap: 3px;
}
.limits .second {
    margin-left: 15px;
}
.limits input[type="checkbox"] {
    appearance: none;
    width: 12px;
    height: 12px;
    margin: 0 1px 0 0;
    border: 1px solid #6f8794;
    border-radius: 2px;
    background: #fff;
}
.limits input:checked::after {
    content: "";
    display: block;
    width: 4px;
    height: 8px;
    margin: 0 0 0 3px;
    border: solid #000;
    border-width: 0 2px 2px 0;
    transform: rotate(40deg);
}
.limits .pts {
    width: 18px;
    height: 22px;
    text-align: center;
}
.order hr {
    align-self: stretch;
    margin: 14px 0 10px;
    border: 0;
    border-top: 1px solid #6f8794;
    border-bottom: 1px solid #fff;
}
.spinners {
    display: flex;
    gap: 64px;
}
.spinner {
    display: flex;
    height: 22px;
}
.spinner input {
    width: 30px;
    text-align: right;
}
.spinner span {
    display: flex;
    flex-direction: column;
    width: 15px;
}
.spinner button {
    flex: 1;
    font-size: 5px;
    line-height: 5px;
    border: 1px solid #6f8794;
    background: linear-gradient(#bad6e3, #a0bdca);
}
.spinner button:disabled {
    color: #7a8f9b;
}
.deal-btn {
    display: flex;
    flex-direction: column;
    align-items: center;
    justify-content: space-between;
    padding: 7px 0 3px;
}
.deal-btn span {
    font-size: 21px;
    line-height: 24px;
}
.deal-btn strong {
    font-size: 32px;
    line-height: 34px;
    font-weight: normal;
}
.deal-btn small {
    font-size: 11px;
    margin-right: 18px;
}
.sell {
    background: #ebbbbb;
}
.buy {
    background: #a9cfa8;
}
.position {
    display: flex;
    flex-direction: column;
    color: #7d8d96;
}
.ticks {
    display: grid;
    grid-template-columns: 1fr 1fr;
    gap: 1px;
    height: 27px;
    background: #7a8f9b;
    border-bottom: 1px solid #7a8f9b;
}
.ticks button {
    background: #ccdae1;
}
.position p {
    margin: auto;
}
.orders {
    display: flex;
    height: 28px;
    background: #ccdae1;
    border-bottom: 1px solid #7a8f9b;
    color: #7d8d96;
    align-items: center;
}
.orders p {
    margin: auto;
}
.orders > button {
    width: 25px;
    height: 27px;
    border-right: 1px solid #7a8f9b;
}
.orders > div {
    display: flex;
    align-items: center;
    justify-content: space-around;
    width: 49px;
    height: 25px;
    border-left: 1px solid #7a8f9b;
}
.positions {
    width: 100%;
    border-collapse: collapse;
    table-layout: fixed;
}
.positions th {
    height: 17px;
    padding: 0 10px;
    font-weight: normal;
    color: #fff;
    text-align: left;
    background: linear-gradient(90deg, #426792 99%, #fff 99%) right center / 100% 8px no-repeat #426792;
}
.positions th svg {
    display: inline-block;
    vertical-align: middle;
}
.positions .qte {
    width: 160px;
    padding: 0 3px;
}
.qte svg + svg {
    margin: 0 57px 0 5px;
}
.positions .pru {
    width: 141px;
}
.positions .ecart {
    width: 68px;
    padding: 0;
    text-align: center;
    background: #426792;
}
.positions td {
    height: 27px;
    padding: 0;
}
.status {
    height: 18px;
    display: flex;
    justify-content: space-between;
    align-items: center;
    padding: 0 2px;
    border-top: 1px solid #6f8794;
    background: linear-gradient(#a0bdca, #c8e2ee);
}
.status span {
    display: flex;
    align-items: center;
    gap: 2px;
}
.status .back {
    transform: rotate(180deg);
}
```
FILE: charts.js
```js
const $ = id => document.getElementById(id);
const icon = (name, size = 20) => `<svg width="${size}" height="${size}"><use href="#${name}"/></svg>`;

/* drawing tools, the first ones also stand on the side */
const tools = ['cursor', 'loupe', 'bell', 'segment', 'hline', 'vline', 'channel', 'zigzag', 'trash', 'tools', 'move', 'copy', 'text', 'arrow', 'up', 'down', 'ellipse', 'rect', 'triangle', 'range',
    'wedge', 'ruler', 'fibo1', 'fibo2', 'diag', 'angle', 'orange', 'ray', 'green', 'fibo3', 'red', 'fibo4', 'arc'];
const toolButton = t => `<button class="tool${t === 'cursor' || t === 'range' ? ' on' : ''}" aria-label="${t}">${icon(t, 22)}</button>`;
$('toolbar').innerHTML = tools.map(toolButton).join('');
$('sidebar').innerHTML = tools.slice(0, 20).map(toolButton).join('');

document.querySelectorAll('.bottombar').forEach(bar => {
    bar.innerHTML = `<button class="draw" aria-label="Dessin">${icon('pencil')}</button><button class="tiny" aria-label="Menu">▼</button>
        <button class="white style" aria-label="Style">${icon('curves', 22)}</button><button class="white tiny" aria-label="Menu">▼</button>
        <button class="share" aria-label="Partager">${icon('share', 16)}</button>` +
        ['chat', 'news', 'book', 'windows', 'setup'].map(n => `<button aria-label="${n}">${icon(n, 18)}</button>`).join('') +
        `<button class="less" aria-label="Moins">«</button>
        <div class="scroll"><button aria-label="Gauche">◀</button><div class="track"><div class="thumb"></div></div><button aria-label="Droite">▶</button></div>` +
        ['zoomfit', 'zoomout', 'zoomin', 'keyboard'].map(n => `<button class="zoom" aria-label="${n}">${icon(n)}</button>`).join('');
});

/* indicator chips */
const stripes = (...c) => `background:linear-gradient(90deg,${c.map((k, i) => `${k} ${i * 100 / c.length}% ${(i + 1) * 100 / c.length}%`).join(',')})`;
const HA = stripes('#e06060', '#3030ff'), PP = stripes('#000', '#008000', '#f00'), BL = 'background:#00f';
const chips = list => `<span class="chip doc">${icon('doc-down', 13)}</span><span class="chip doc">${icon('doc-up', 13)}</span>` +
    list.map(([t, s, hot]) => `<span class="chip${hot ? ' hot' : ''}"><i ${s ? `style="${s}"` : 'class="off"'}></i>${t}</span>`).join('');
$('chipsLeft').innerHTML = chips([['Heikin-Ashi', HA], ['Points pivots (J)', PP], ['EMA (200)', stripes('#00a000', '#f00')], ['EMA (10)', stripes('#900', '#3030ff')], ['Parab SAR (0,02)', '']]);
$('chipsRight').innerHTML = chips([['Heikin-Ashi', HA], ['Points pivots (J)', PP], ['EMA (200)', ''], ['EMA (100)', ''], ['EMA (20)', stripes('#3000ff', '#ff3030')],
    ['Points pivots (S)', PP], ['Points pivots (4h)', PP], ['Points pivots (M)', PP], ['Clôture (J)', BL], ['Plus Haut (J, Pré)', BL, 1], ['Plus Bas (J, Pré)', BL],
    ['Plus Bas (M, Pré)', BL], ['Plus Haut (M, Pré)', BL], ['Plus Bas (S, Pré)', BL], ['Plus Haut (S, Pré)', BL]]);

/* chart data is kept on a grid three times finer than the screen */
const px = (v, origin) => Math.round((v - origin) / 3);
const FAR = 12000;

/* each candle: direction, high, body top, body bottom, low */
const leftCandles = `r474,519,556,609 b487,516,538,618 b388,451,529,529 b339,447,490,490 b347,373,430,430 r363,391,450,555 r270,391,450,500 r400,430,500,686 b240,440,463,578 b198,330,410,410
b297,373,391,450 r373,378,391,483 b303,400,440,460 r306,430,530,765 r465,465,735,827 r600,600,800,864 r700,700,937,1107 r820,820,1093,1173 b768,880,955,1092 b690,817,943,943
b785,868,873,915 r877,883,905,968 r880,887,947,1026 r910,920,980,1052 r903,948,977,1052 b747,850,962,962 b534,687,907,907 b578,662,796,796 b640,673,715,715 r633,693,711,760
r700,703,790,840 r742,748,800,854 b703,757,772,825 b637,676,767,767 b600,661,721,721 r687,687,720,803 b652,694,707,707 b647,685,695,705 r655,686,697,760 b620,679,690,765
b570,622,685,685 b600,646,652,685 r620,649,651,670 r620,649,668,690 r635,656,671,700 r638,668,685,710 r672,673,745,771 r703,709,733,807 b456,595,721,721 b491,523,658,658
b515,535,592,592 b510,529,562,562 b488,508,547,547 b485,511,529,541 b444,499,520,555 b414,445,508,508 b371,412,477,477 b288,361,438,438 b257,298,404,404 r288,352,379,467
r366,371,460,490 r360,412,415,465 r400,415,470,542 r427,430,514,563 b383,447,478,495 b400,424,460,470 r420,440,458,485 r437,457,482,512 r462,465,493,522 r470,478,488,515
r478,482,538,570 r508,511,587,636 r545,547,550,580 b522,538,549,568 r530,544,558,600 r540,553,560,616 b515,531,556,556 b475,505,545,545 b415,463,523,523 r456,493,517,578
r470,505,517,570 r515,517,604,695 r560,562,661,698 r567,610,613,640 r600,612,622,648 b590,614,619,645 b506,583,613,613 r576,598,620,663`;
const rightCandles = `r564,595,613,662 r603,603,667,768 b534,633,635,690 r633,633,751,873 r693,693,973,1131 r845,845,1193,1283 r957,1011,1105,1247 b927,1026,1058,1121 r957,1041,1085,1151 r909,1062,1088,1178
b975,1072,1075,1198 b927,1011,1075,1076 b726,888,1042,1047 b717,786,967,967 b630,708,877,877 b630,726,793,793 r759,759,913,1074 r841,841,925,925 r813,882,892,1104 b708,801,886,886
b744,810,843,921 b489,669,829,829 b639,693,748,807 b564,666,721,759 r687,693,751,795 r723,723,868,987 r795,795,1105,1343 r951,951,1226,1312 r1086,1086,1212,1326 b870,1044,1150,1190
b765,954,1096,1096 r948,1026,1058,1121 b774,960,1042,1104 b429,705,1000,1000 b543,606,853,853 b468,558,730,730 b543,603,646,699 b351,492,625,633 b342,402,559,559 b372,471,481,546
r477,477,664,825 r570,570,742,838 r600,654,662,720 r543,657,667,738 r600,663,691,759 r648,675,745,855 r711,711,853,921 r765,780,832,891 b755,804,807,855 r792,804,826,882
b774,804,814,834 b600,735,811,811 b552,696,772,777 b564,660,736,736 r660,696,712,825 r705,705,886,1065 r795,795,1280,1504 r1035,1035,1400,1504 r1218,1218,1309,1362 r1263,1263,1360,1410
r1311,1311,1480,1632 r1395,1395,1549,1632 r1455,1473,1561,1650 r1515,1515,1640,1707 r1542,1578,1594,1668 r1521,1587,1600,1680 r1593,1593,1830,2025 r1710,1710,1996,2073 r1854,1854,1999,2109 r1926,1926,2077,2205
r2001,2001,2248,2340 r2124,2124,2209,2290 b2031,2118,2167,2217 r2058,2143,2146,2274 b2079,2136,2146,2196 b2001,2076,2140,2178 b1953,2013,2110,2110 b1752,1860,2062,2062 b1581,1665,1963,1963 b1416,1506,1813,1813
b1350,1407,1660,1660 b1359,1527,1534,1689 r1530,1530,1735,1812 r1617,1632,1708,1785 r1551,1668,1678,1764 r1674,1674,1837,1926 r1740,1755,1846,1926 r1800,1800,1919,2040 r1809,1857,1906,1983 r1881,1881,1978,2100
r1875,1929,1972,2070 r1884,1950,1960,2100 b1830,1917,1957,1983 b1608,1746,1939,1939 b1473,1560,1843,1843 b1473,1551,1702,1702 b1290,1437,1627,1627 b1068,1197,1531,1531 b1032,1134,1366,1366 b1128,1212,1249,1263
r1185,1230,1264,1332 r1248,1248,1315,1359 r1224,1281,1333,1389 r1233,1308,1330,1389 r1299,1317,1477,1647 r1398,1398,1567,1647 r1473,1482,1540,1686 r1464,1513,1516,1629 b1356,1443,1513,1542 b1251,1335,1480,1480
b1164,1296,1408,1408 r1347,1350,1450,1581 r1338,1401,1432,1524 b1272,1365,1417,1503 b1233,1329,1390,1390 b1281,1345,1360,1443 r1290,1350,1363,1503 b1155,1260,1357,1389 b1107,1161,1309,1309 b1128,1206,1237,1311
r1164,1221,1261,1326 r1212,1239,1300,1341 r1212,1269,1306,1359 r1260,1287,1315,1380 r1251,1302,1378,1515 r1338,1338,1489,1581 r1347,1413,1465,1590 b1116,1251,1438,1438 b867,1026,1345,1345 b936,987,1186,1186
b945,1020,1087,1092 b984,1023,1054,1083 b936,999,1039,1039 b845,957,1018,1062 b792,879,988,988 b687,807,934,934 b609,720,871,871 b522,600,796,796 b465,531,697,697 b474,555,616,630
r585,585,760,891 r672,672,892,940 r675,780,841,948 b696,795,811,870 r801,801,922,1044 r861,861,982,1092 b723,843,922,939 b753,825,880,909 r792,852,901,987 r831,876,913,987
r888,894,922,1005 r888,906,976,1083 r942,942,1123,1227 r1032,1032,1135,1236 b984,1032,1084,1084 b1011,1044,1060,1119 r996,1053,1060,1197 b984,1026,1057,1083 b897,978,1042,1042 b783,879,1012,1012
b801,936,946,1083 r897,939,1000,1119 r906,969,1033,1158 r1002,1002,1252,1359 r1129,1129,1291,1371 b1098,1191,1210,1284 b1137,1194,1200,1263 b1116,1179,1198,1254`;

function plotTools(ox, oy) {
    const X = v => px(v, ox), Y = v => px(v, oy);
    const t = {
        hline: (y, color, w, dash = '') => `<line class="sharp" x1="0" x2="100%" y1="${Y(y)}" y2="${Y(y)}" stroke="${color}" stroke-width="${w}" stroke-dasharray="${dash}"/>`,
        box: (x1, y1, x2, y2, attrs) => `<rect class="sharp" x="${X(x1)}" y="${Y(y1)}" width="${X(x2) - X(x1)}" height="${Y(y2) - Y(y1)}" ${attrs}/>`,
        text: (x, y, s, attrs = '') => `<text x="${X(x)}" y="${Y(y)}" ${attrs}>${s}</text>`,
        rlabel: (y, s, color) => `<text x="100%" dx="-5" text-anchor="end" y="${Y(y)}" fill="${color}">${s}</text>`,
        path: pts => 'M' + pts.trim().split(/\s+/).map(p => { const [a, b] = p.split(','); return X(+a) + ' ' + Y(+b); }).join('L'),
        line: (pts, color, w = 1) => `<path d="${t.path(pts)}" fill="none" stroke="${color}" stroke-width="${w}"/>`,
        candles: (data, first, step, w) => data.trim().split(/\s+/).map((c, i) => {
            const [h, a, b, l] = c.slice(1).split(',').map(Number);
            const up = c[0] === 'b', x = X(first + i * step), edge = up ? '#0000b4' : '#a02020';
            return `<path d="M${x + 0.5} ${Y(h)}V${Y(l)}" stroke="${edge}"/>
                <rect x="${x - (w - 1) / 2 + 0.5}" y="${Y(a) + 0.5}" width="${w - 1}" height="${Math.max(1, Y(b) - Y(a))}" fill="url(#${up ? 'candleUp' : 'candleDown'})" stroke="${edge}"/>`;
        }).join(''),
        up: (x, y) => `<path transform="translate(${X(x)} ${Y(y)})" d="M0 0l6 6H3v6h-6V6h-3z" fill="#30c838" stroke="#109818"/>`,
        down: (x, y) => `<path transform="translate(${X(x)} ${Y(y)})" d="M0 12l6-6H3V0h-6v6h-3z" fill="#f05050" stroke="#c02828"/>`,
        cross: (x, y) => `<path transform="translate(${X(x)} ${Y(y)})" d="M-4-4l8 8M4-4l-8 8" stroke="#e84c4c" stroke-width="4"/>`,
        tri: (x, y, d, color) => `<path transform="translate(${X(x)} ${Y(y)})" d="M${-2 * d}-4V4L${2 * d} 0z" fill="${color}" stroke="#444" stroke-opacity=".4"/>`,
        note: (x1, y1, x2, y2, a, b) => t.box(x1, y1, x2, y2, 'fill="#fff" stroke="#000"') + t.text(x1 + 7, y1 + 36, a) + t.text(x1 + 7, y1 + 75, b),
        measure: (x1, y1, x2, y2, fall) => t.box(x1, y1, x2, y2, 'fill="#8080d0" fill-opacity=".1" stroke="none"') +
            `<path class="sharp" d="M${X(x1)} ${Y(y1)}H${X(x2)}M${X(x1)} ${Y(y2)}H${X(x2)}" stroke="#000" stroke-dasharray="12 12"/>
             <path class="sharp" d="M${X(x1)} ${Y(y1)}V${Y(y2)}M${X(x2)} ${Y(y1)}V${Y(y2)}" stroke="#000" stroke-dasharray="4 4"/>` +
            t.line(fall ? `${x1},${y1} ${x2},${y2}` : `${x1},${y2} ${x2},${y1}`, '#222')
    };
    return t;
}

const BROWN = '#993300', ORANGE = '#ff8040', GREEN = '#008000', DASH = '21 9';
const orangeBox = (t, x, y1, y2) => t.box(x, y1, FAR, y2, 'fill="#ff8040" fill-opacity=".17" stroke="none"');
const orangeEdge = (t, x, y1, y2) => t.hline(y1, 'none', 2) +
    `<path class="sharp" d="M${t.path(`${x},${y1} ${FAR},${y1}`).slice(1)}${t.path(`${x},${y1} ${x},${y2}`)}${t.path(`${x},${y2} ${FAR},${y2}`)}" fill="none" stroke="${ORANGE}" stroke-width="2" stroke-dasharray="${DASH}"/>`;
const credit = `<text x="2" y="100%" dy="-3">© IT-Finance.com <tspan dx="2" font-style="italic">Données indicatives</tspan></text>`;

/* 3 minutes chart */
let t = plotTools(96, 75);
const darkEma = ['285,440 300,490 325,570 340,660 352,740 368,748 382,775 410,810 440,873 455,885', '525,768 556,782 575,765', '720,675 760,675 772,692', '975,430 1000,455 1035,460', '1060,450 1105,465 1140,505 1175,527', '1235,510 1265,525 1295,562 1325,585', '1350,588 1375,598'];
const blueEma = ['96,470 107,484 135,478 151,460', '455,885 470,855 490,810 505,780 525,768', '575,765 590,740 615,720 655,712 690,685 720,675', '772,692 795,692 800,680 820,640 850,595 885,570 905,530 920,508 945,450', '1035,460 1060,450', '1175,527 1200,526 1235,510', '1325,585 1350,588'];
$('priceLeft').innerHTML = orangeBox(t, 192, 192, 679) + t.candles(leftCandles, 106, 14.48, 5) +
    darkEma.map(p => t.line(p, '#901010')).join('') + blueEma.map(p => t.line(p, '#5050ff')).join('') +
    [270, 735, 1200].map(y => t.hline(y, BROWN, 2, DASH)).join('') + orangeEdge(t, 192, 192, 679) +
    t.line('96,154 106,160 150,167 205,179 250,183 290,190 325,205 355,223 410,245 455,268 500,282 560,301 620,318 715,337 770,350 830,361 880,367 1000,370 1100,377 1250,392 1330,403 1380,411', '#f00', 3) + t.line('917,367 947,367', '#00a000', 3) +
    t.hline(109, GREEN, 3) + t.hline(442, ORANGE, 3) + t.hline(879, '#000', 4) + t.hline(925, GREEN, 3) +
    t.box(90, 391, 395, 438, `fill="#fff" stroke="${ORANGE}"`) + t.text(102, 430, 'OPR 50% 13 981,6', `fill="${ORANGE}"`) +
    t.rlabel(99, 'S1 J', GREEN) + t.rlabel(869, 'Piv S', '#000') + t.rlabel(915, 'S2 J', GREEN) +
    t.cross(932, 478) + t.up(889, 565) + t.box(454, 979, 485, 1010, 'fill="#38c838" stroke="#109818"') + t.down(425, 1039) +
    t.text(1347, 640, 'P') + t.box(1349, 649, 1366, 655, 'fill="#000"') + credit;

/* 100 ticks chart */
t = plotTools(3, 75);
const redEma = ['127,845 140,867 163,878 238,939 286,951', '382,886 406,897', '601,817 625,826 649,865 673,903 697,927 721,931 769,955', '964,730 988,739', '1036,724 1060,727', '1084,718 1132,742 1156,748 1180,751 1204,760 1228,763',
    '1327,742 1351,775 1375,835 1399,885 1410,905 1448,970 1495,1075 1545,1180 1567,1210 1592,1255 1616,1325 1665,1440 1687,1500 1714,1585 1738,1640 1762,1680 1786,1728 1810,1763 1834,1788 1858,1807', '1978,1708 2002,1717',
    '2026,1711 2052,1714 2076,1738 2100,1744 2125,1765 2150,1778 2175,1802 2200,1815 2222,1825 2246,1832', '2512,1501 2536,1513 2560,1513', '2680,1468 2704,1471', '2996,1345 3020,1355 3045,1372', '3478,916 3502,922 3530,922', '3577,905 3602,908',
    '3626,908 3650,908 3673,917 3698,945 3720,955 3745,965 3770,970 3820,979 3840,979', '3916,968 3940,980 3965,1020 3990,1043 4013,1052 4037,1072 4060,1075 4074,1080'];
const violetEma = ['286,951 334,915 358,900 382,886', '406,897 430,892 478,880 502,865 550,829 577,821 601,817', '769,955 793,948 817,915 865,855 889,828 913,783 940,751 964,730', '988,739 1036,724', '1060,727 1084,718', '1228,763 1276,758 1303,748 1327,742',
    '1858,1807 1883,1800 1908,1780 1930,1747 1954,1710 1978,1708', '2002,1717 2026,1711', '2246,1832 2270,1812 2294,1780 2318,1758 2342,1718 2366,1660 2390,1612 2416,1580 2440,1556 2464,1535 2488,1518 2512,1501', '2560,1513 2608,1509 2632,1498 2656,1478 2680,1468',
    '2704,1471 2728,1458 2752,1446 2790,1432 2827,1420 2852,1392 2875,1372 2900,1360 2920,1355 2996,1345', '3045,1372 3067,1372 3092,1352 3115,1315 3140,1283 3165,1263 3190,1235 3215,1215 3240,1185 3265,1158 3290,1118 3310,1075 3335,1025 3358,980 3382,947 3405,941 3430,940 3455,925 3478,916',
    '3530,922 3553,907 3577,905', '3602,908 3626,908', '3840,979 3865,962 3892,970 3916,968'];
const zone = (y1, y2, x) => t.box(-30, y1, x, y2, 'fill="#30b030" fill-opacity=".16" stroke="#30b030"');
$('priceRight').innerHTML = orangeBox(t, 576, 330, 1330) + [486, 1446].map(y => t.hline(y, BROWN, 2, DASH)).join('') + t.hline(154, GREEN, 3) +
    zone(40, 157, 3237) + zone(391, 487, 3237) + zone(841, 934, 3165) +
    t.box(406, 1843, FAR, 1939, 'fill="#f03050" fill-opacity=".2" stroke="#e80000"') +
    t.candles(rightCandles, 17, 24.2, 7) +
    redEma.map(p => t.line(p, '#ff4848')).join('') + violetEma.map(p => t.line(p, '#4828f0')).join('') +
    t.hline(706, '#0000c8', 1, '4 4') + t.hline(2290, '#0000c8', 1, '4 4') + orangeEdge(t, 576, 330, 1330) +
    t.measure(1614, 406, 1833, 820, true) + t.note(1839, 567, 1972, 655, '+21,6', '+0,15 %') + t.note(1658, 825, 1786, 913, '9 unités', '5m 45s') +
    t.measure(1809, 1000, 1905, 1288, false) + t.note(1668, 1098, 1801, 1186, '+15,0', '+0,11 %') + t.note(1793, 1292, 1921, 1380, '4 unités', '2m 15s') +
    t.hline(841, ORANGE, 3) + t.hline(993, GREEN, 3) + t.hline(1740, '#000', 4) + t.hline(1831, GREEN, 3) +
    t.box(-10, 790, 302, 838, `fill="#fff" stroke="${ORANGE}"`) + t.text(9, 829, 'OPR 50% 13 981,6', `fill="${ORANGE}"`) +
    t.box(379, 2031, 430, 2500, 'fill="#fff" stroke="#000"') + `<path class="sharp" d="M142.500 0V2000" stroke="#000"/>` +
    `<text transform="translate(138 765) rotate(-90)">11 janv. 2021 08:59:33</text>` +
    t.cross(3334, 826) + t.up(3262, 1003) + t.box(2277, 1861, 2307, 1892, 'fill="#38c838" stroke="#109818"') + t.down(2125, 2053) +
    t.tri(3347, 574, -1, '#f02020') + t.tri(2137, 1897, -1, '#f02020') + t.tri(3249, 877, 1, '#20d020') + t.tri(2280, 1609, 1, '#20d020') +
    t.rlabel(144, 'S1 J', GREEN) + t.rlabel(696, 'Bas (J, Pré)', '#00f') + t.rlabel(984, 'mS2 J', GREEN) + t.rlabel(1731, 'Piv S', '#000') + t.rlabel(1821, 'S2 J', GREEN) +
    t.rlabel(2281, 'Haut (M, Pré)', '#00f') + t.rlabel(2386, 'mS3 J', GREEN) + credit;

/* RSI panels: the curve is filled above and below the middle level */
function rsi(id, ox, oy, mid, levels, dashed, pts, color, below) {
    const q = plotTools(ox, oy), m = px(mid, oy), area = q.path(pts) + `V${m}H0z`;
    $(id).innerHTML = `<clipPath id="${id}Up"><rect width="4000" height="${m}"/></clipPath><clipPath id="${id}Down"><rect y="${m}" width="4000" height="400"/></clipPath>
        <path d="${area}" fill="#20a040" fill-opacity=".22" clip-path="url(#${id}Up)"/><path d="${area}" fill="${below}" fill-opacity=".25" clip-path="url(#${id}Down)"/>` +
        dashed.map(y => q.hline(y, '#ff6a00', 1, '12 12')).join('') + levels.map(y => q.hline(y, '#2828d8', 1)).join('') + q.line(pts, color);
}
rsi('rsiLeft', 96, 372, 541, [487, 541, 598], [], `96,567 107,560 121,542 137,540 151,523 166,525 182,547 194,532 209,553 223,525 240,528 268,544 281,533 297,570 311,580 327,577 342,600 353,600 367,560 382,570 397,565 415,572 440,577 455,568 470,547 485,532 500,534
545,553 570,545 583,533 612,541 628,535 645,541 657,540 671,529 686,531 702,539 716,532 730,540 744,535 758,547 773,550 787,543 802,518 817,514 830,521 845,518 860,511 875,521 901,502 917,502 932,487 947,486 961,526 988,520 1002,541 1016,536 1033,520 1047,522 1061,538
1075,541 1090,535 1105,537 1120,559 1162,545 1178,556 1193,542 1215,539 1235,526 1249,553 1265,543 1279,574 1293,562 1308,556 1322,558 1336,550 1351,552 1377,562`, '#111', '#a02030');
rsi('rsiRight', 3, 1035, 1228, [1165, 1228, 1294], [1198, 1261], `3,1208 20,1213 67,1213 91,1232 115,1258 139,1265 163,1243 190,1250 238,1252 262,1238 286,1243 310,1213 334,1211 382,1216 406,1246 430,1222 478,1222 502,1217 526,1207 550,1207 577,1216 601,1223 625,1241 649,1274 673,1270
697,1262 721,1232 745,1243 769,1246 793,1226 817,1200 865,1195 889,1201 913,1183 940,1189 964,1206 988,1231 1036,1216 1060,1229 1084,1219 1108,1237 1132,1240 1156,1238 1180,1232 1204,1237 1228,1231 1276,1222 1303,1213 1327,1223 1351,1265 1375,1292 1399,1273 1423,1273
1447,1279 1471,1288 1495,1288 1545,1292 1567,1279 1592,1288 1615,1309 1640,1303 1663,1303 1690,1315 1714,1318 1738,1297 1762,1288 1786,1297 1810,1282 1858,1264 1882,1238 1906,1219 1930,1204 1954,1200 1978,1234 2002,1243 2026,1229 2052,1237 2077,1251 2100,1243 2125,1255
2149,1243 2173,1258 2197,1243 2221,1249 2245,1240 2269,1216 2293,1204 2317,1213 2341,1192 2366,1180 2390,1189 2415,1197 2440,1204 2488,1210 2512,1207 2536,1237 2560,1228 2584,1222 2608,1225 2656,1201 2680,1216 2704,1228 2728,1213 2776,1216 2803,1207 2827,1216 2851,1195
2875,1195 2900,1207 2925,1216 2948,1222 2970,1219 2996,1219 3020,1240 3043,1252 3067,1225 3092,1201 3116,1180 3140,1192 3166,1198 3190,1192 3214,1195 3238,1186 3262,1183 3286,1174 3310,1162 3358,1150 3382,1174 3407,1213 3431,1219 3455,1204 3479,1210 3502,1227 3530,1225
3554,1204 3578,1219 3602,1227 3625,1222 3650,1222 3673,1237 3698,1258 3721,1237 3745,1234 3770,1234 3793,1231 3817,1234 3842,1228 3866,1201 3892,1240 3916,1222 3940,1246 3965,1264 4013,1240 4037,1249 4060,1234 4077,1237`, '#901010', '#f03070');

/* vertical axes: [level, text, bold] and boxed tags [level, text, color, bold] */
function axis(id, oy, labels, tags) {
    $(id).innerHTML = labels.map(([v, s, b]) => { const y = px(v, oy); return `<path class="sharp" d="M0 ${y}h4" stroke="#6f8794"/><text x="7" y="${y + 4}" ${b ? 'class="major"' : ''}>${s}</text>`; }).join('') +
        tags.map(([v, s, c, b]) => { const y = px(v, oy), w = s.length > 6 ? 45 : b ? 43 : 36; return `<path class="sharp" d="M0 ${y}h4" stroke="${c}"/><rect x="4.500" y="${y - 7.5}" width="${w}" height="15" fill="url(#tag)" stroke="#6f8794"/><text x="6" y="${y + 4}" fill="${c}" ${b ? 'class="major"' : ''}>${s}</text>`; }).join('');
}
axis('axisLeft', 75, [[85, '14 020'], [178, '14 010'], [270, '14 000', 1], [364, '13 990'], [457, '13 980'], [550, '13 970'], [735, '13 950', 1], [829, '13 940'], [1015, '13 920'], [1107, '13 910'], [1200, '13 900', 1]],
    [[109, '14 017,3', GREEN], [688, '13 955,4', '#f00'], [649, '13 959,0', '#000'], [879, '13 934,7', '#000'], [924, '13 929,9', GREEN]]);
axis('axisRight', 75, [[103, '14 020'], [295, '14 010'], [486, '14 000', 1], [679, '13 990'], [870, '13 980'], [1063, '13 970'], [1255, '13 960'], [1446, '13 950', 1], [1639, '13 940'], [2022, '13 920'], [2215, '13 910']],
    [[154, '14 017,3', GREEN], [706, '13 988,6', '#00f'], [994, '13 973,6', GREEN], [1272, '13 959,0', '#000'], [1740, '13 934,7', '#000'], [1831, '13 929,9', GREEN], [2290, '13 906,1', '#00f']]);
axis('rsiAxisLeft', 369, [[398, '100', 1], [457, '80'], [514, '60'], [571, '40']], [[615, '23,715', '#000']]);
axis('rsiAxisRight', 1032, [[1067, '100', 1], [1132, '80'], [1197, '60'], [1261, '40'], [1324, '20']], [[1282, '33,526', '#900', 1]]);

function times(id, ox, labels, blanks = []) {
    $(id).innerHTML = labels.map(([v, s, b]) => `<path class="sharp" d="M${px(v, ox)} 0v3" stroke="#6f8794"/><text x="${px(v, ox)}" y="14" text-anchor="middle" ${b ? 'class="major"' : ''}>${s}</text>`).join('') +
        blanks.map(v => `<path class="sharp" d="M${px(v, ox)} 0v3" stroke="#6f8794"/>`).join('');
}
times('timeLeft', 96, [[193, '09:00'], [484, '10:00'], [772, '11:00'], [1060, '12:00']]);
times('timeRight', 3, [[67, '08:24'], [238, '08:43'], [454, '09:00', 1], [793, '09:06'], [1060, '09:12'], [1228, '09:18'], [1423, '09:24'], [1615, '09:30'], [1834, '09:36'], [2026, '09:42'], [2125, '09:49'], [2341, '10:01', 1],
    [2488, '10:07'], [2632, '10:18'], [2752, '10:30'], [2876, '10:42'], [3043, '11:00', 1], [3190, '11:14'], [3310, '11:31'], [3454, '11:44'], [3602, '12:00', 1], [3746, '12:18'], [3892, '12:38']],
    [43, 91, 163, 334, 406, 2220, 2560, 2704, 2827, 2948, 2996, 3115, 3238, 3262, 3382, 3502, 3553, 3650, 3697, 3793, 3841, 3940, 3988]);
```
